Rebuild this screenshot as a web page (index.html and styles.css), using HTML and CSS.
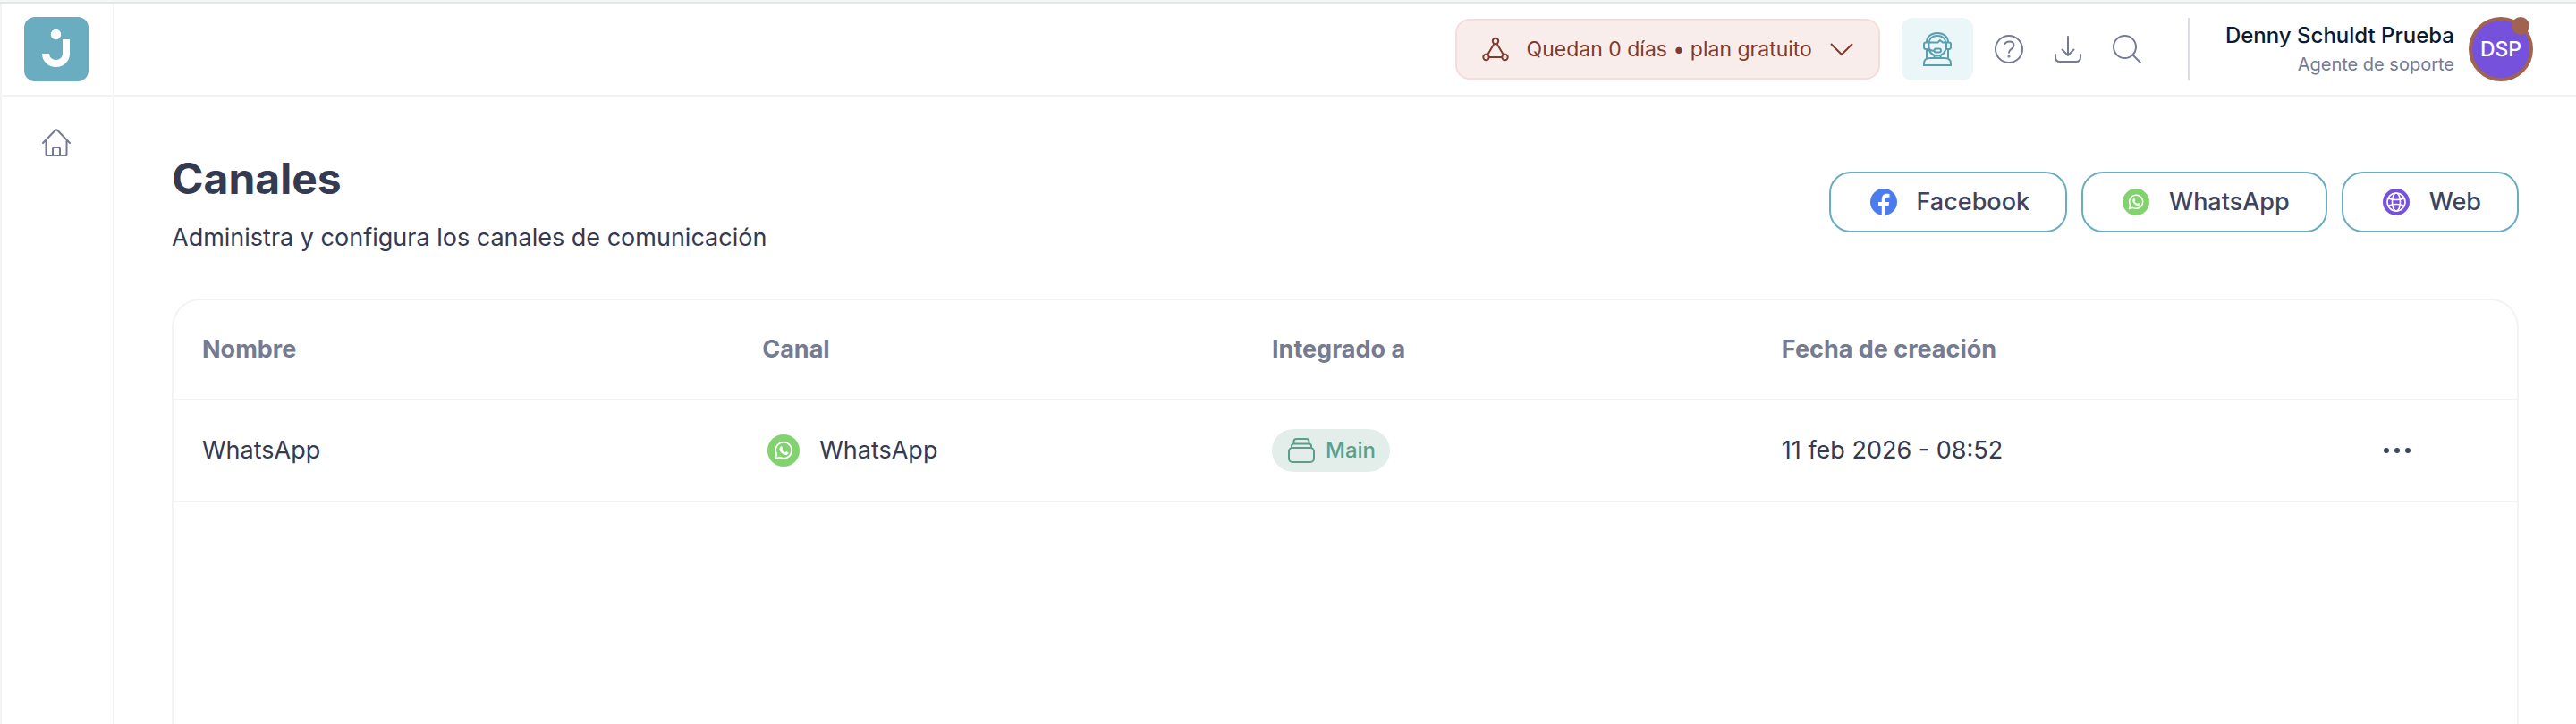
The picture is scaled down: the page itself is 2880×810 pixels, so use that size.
FILE: index.html
```
<!DOCTYPE html>
<html lang="es">
  <head>
    <title>Canales</title>
    <meta charset="UTF-8">
    <meta name="viewport" content="width=device-width, initial-scale=1.0">
    <link rel="stylesheet" href="styles.css">
  </head>
  <body>

<!-- SVG symbols used more than once -->
<svg class="sprite" aria-hidden="true">
  <symbol id="whatsapp" viewBox="0 0 36 36">
    <circle cx="18" cy="18" r="18" fill="#82d36f"/>
    <path d="M9 27l1.300-4.900a9 9 0 1 1 3.500 3.500z" fill="none" stroke="#fff" stroke-width="1.800" stroke-linejoin="round"/>
    <path d="M15.200 13.300c.5-.2 1 0 1.200.4l.7 1.700c.2.5-.7 1.200-.8 1.600.7 1.500 1.900 2.600 3.500 3.200.5-.1 1-1.200 1.500-1.100l1.800.9c.5.3.3 1.200 0 1.700-.7 1.200-2.200 1.500-3.500 1.100-3.300-1-5.400-3.200-6.100-5.900-.2-1.500.5-3.100 1.700-3.600z" fill="#fff"/>
  </symbol>
</svg>

<div class="app">

<!-- SIDEBAR -->
<aside class="sidebar">
  <a class="logo" href="#" aria-label="Inicio">
    <svg viewBox="0 0 72 72" width="72" height="72">
      <circle cx="35.500" cy="19.500" r="5.700" fill="#fff"/>
      <path d="M24 41a11.500 11 0 0 0 23 0V25" fill="none" stroke="#fff" stroke-width="8"/>
    </svg>
  </a>
  <nav class="menu">
    <a href="#" aria-label="Panel">
      <svg class="icon" viewBox="0 0 32 32" width="32" height="32">
        <path d="M1 16L14.300 2.200q1.700-1.600 3.400 0L31 16M4.500 13.500V28q0 2 2 2h19q2 0 2-2V13.500M12 30v-7q0-2 2-2h4q2 0 2 2v7"/>
      </svg>
    </a>
  </nav>
</aside>

<div class="content">

<!-- TOP BAR -->
<header class="topbar">
  <button class="plan" type="button">
    <svg viewBox="0 0 30 28" width="30" height="28">
      <circle cx="15" cy="5" r="3.200"/>
      <circle cx="4.500" cy="23" r="3.200"/>
      <circle cx="25.500" cy="23" r="3.200"/>
      <path d="M13.400 8L6.300 20M16.600 8l7.100 12M8 23h14"/>
    </svg>
    <span>Quedan 0 días • plan gratuito</span>
    <svg viewBox="0 0 26 16" width="26" height="16"><path d="M1 2l12 12L25 2"/></svg>
  </button>
  <button class="agent" type="button" aria-label="Agente">
    <svg viewBox="0 0 32 38" width="32" height="38">
      <path d="M4 11.500C4 5 9 1 16 1s12 4 12 10.500M7 11.500C7 7 10.500 4 16 4s9 3 9 7.500"/>
      <path d="M4 11.500H3q-2 0-2 2V17q0 2 2 2h3v-7.500zM28 11.500h1q2 0 2 2V17q0 2-2 2h-3v-7.500z"/>
      <path d="M7 11.500h9.500L19 9l3 2.500h3.500M6.500 12v5c0 5.500 4 9.500 9.500 9.500s9.500-4 9.500-9.500v-5"/>
      <path d="M6.500 18.500q3 3 6 2M4 19v10M28 19v10M12.500 26v3M19.500 26v3"/>
      <rect x="12.500" y="18.500" width="7.500" height="4" rx="2"/>
      <path d="M1 37v-2q0-6 7-6h16q7 0 7 6v2z"/>
    </svg>
  </button>
  <div class="tools">
    <button type="button" aria-label="Ayuda">
      <svg class="icon" viewBox="0 0 32 32" width="32" height="32">
        <circle cx="16" cy="16" r="15"/>
        <path d="M11.500 10Q13 7.500 16.500 7.500c3 0 5 1.700 5 4.300 0 4.200-5.500 4-5.500 8"/>
        <circle cx="16" cy="24" r=".6"/>
      </svg>
    </button>
    <button type="button" aria-label="Descargar">
      <svg class="icon" viewBox="0 0 32 32" width="32" height="32">
        <path d="M16 2v21M9.500 16.500L16 23l6.500-6.500M2 22v3q0 5 5 5h18q5 0 5-5v-3"/>
      </svg>
    </button>
    <button type="button" aria-label="Buscar">
      <svg class="icon" viewBox="0 0 32 32" width="32" height="32">
        <circle cx="13.500" cy="13.500" r="12.500"/>
        <path d="M22.500 22.500L31 31"/>
      </svg>
    </button>
  </div>
  <div class="user">
    <div>
      <p class="userName">Denny Schuldt Prueba</p>
      <p class="userRole">Agente de soporte</p>
    </div>
    <div class="avatar">DSP<span class="status"></span></div>
  </div>
</header>

<!-- CHANNELS -->
<main>
  <div class="heading">
    <div>
      <h1>Canales</h1>
      <p class="subtitle">Administra y configura los canales de comunicación</p>
    </div>
    <div class="channels">
      <button type="button">
        <svg viewBox="0 0 30 30" width="30" height="30">
          <circle cx="15" cy="15" r="15" fill="#4a7cf0"/>
          <path d="M12.800 30V19.200H9V15h3.800v-3.200c0-3.900 2.300-6 5.700-6 1.300 0 2.700.2 3 .3v3.600h-2c-1.800 0-2.500 1.100-2.500 2.400V15h4.200l-.7 4.200H17V30z" fill="#fff"/>
        </svg>
        Facebook
      </button>
      <button type="button">
        <svg width="30" height="30"><use href="#whatsapp"/></svg>
        WhatsApp
      </button>
      <button type="button">
        <svg viewBox="0 0 30 30" width="30" height="30">
          <circle cx="15" cy="15" r="15" fill="#7551dc"/>
          <g fill="none" stroke="#fff" stroke-width="1.600">
            <circle cx="15" cy="15" r="10"/>
            <ellipse cx="15" cy="15" rx="4.500" ry="10"/>
            <path d="M6 11q9 3 18 0M6 19q9-3 18 0"/>
          </g>
        </svg>
        Web
      </button>
    </div>
  </div>

  <div class="card">
    <table>
      <thead>
        <tr>
          <th class="colName">Nombre</th>
          <th class="col">Canal</th>
          <th class="col">Integrado a</th>
          <th class="col">Fecha de creación</th>
          <th></th>
        </tr>
      </thead>
      <tbody>
        <tr>
          <td>WhatsApp</td>
          <td>
            <div class="channel">
              <svg width="36" height="36"><use href="#whatsapp"/></svg>
              WhatsApp
            </div>
          </td>
          <td>
            <span class="tag">
              <svg viewBox="0 0 30 28" width="30" height="28">
                <rect x="1" y="11" width="28" height="16" rx="4"/>
                <path d="M4 11V9q0-2.500 2.500-2.500h17Q26 6.500 26 9v2M6.500 6.500V4Q6.500 1 9.500 1h11q3 0 3 3v2.500"/>
              </svg>
              Main
            </span>
          </td>
          <td>11 feb 2026 - 08:52</td>
          <td class="actions">
            <button type="button" aria-label="Opciones">
              <svg viewBox="0 0 30 6" width="30" height="6">
                <circle cx="3" cy="3" r="3"/>
                <circle cx="15" cy="3" r="3"/>
                <circle cx="27" cy="3" r="3"/>
              </svg>
            </button>
          </td>
        </tr>
      </tbody>
    </table>
  </div>
</main>

</div>
</div>

  </body>
</html>
```
FILE: styles.css
```
*{
box-sizing: border-box;
}

body{
display: flex;
flex-direction: column;
min-height: 100vh;
margin: 0;
border-top: 2px solid #f5f8f7;
background-color: #fff;
color: #343a52;
font-family: Inter, "Liberation Sans", sans-serif;
font-size: 27px;
line-height: 32px;
}

h1, p{
margin: 0;
}

button{
padding: 0;
border: 0;
background: none;
color: inherit;
font: inherit;
}

svg{
display: block;
flex: none;
}

.sprite{
position: absolute;
width: 0;
height: 0;
}

.app{
display: flex;
flex: 1;
border-top: 2px solid #dfe8e6;
box-shadow: inset 2px 0 #f3f3f4;
}

.icon{
fill: none;
stroke: #757b92;
stroke-width: 2;
stroke-linecap: round;
stroke-linejoin: round;
}

.sidebar{
flex: none;
width: 128px;
border-right: 2px solid #f3f3f4;
}

.logo{
display: flex;
align-items: center;
justify-content: center;
height: 104px;
border-bottom: 2px solid #f3f3f4;
}

.logo svg{
border-radius: 12px;
background-color: #6aadc0;
}

.menu{
display: flex;
flex-direction: column;
align-items: center;
padding-top: 36px;
}

.content{
display: flex;
flex-direction: column;
flex: 1;
min-width: 0;
}

.topbar{
display: flex;
align-items: center;
justify-content: flex-end;
height: 104px;
padding-right: 48px;
border-bottom: 2px solid #f3f3f4;
}

.plan{
display: flex;
align-items: center;
gap: 20px;
height: 68px;
padding: 0 28px;
border: 2px solid #f6dcdc;
border-radius: 16px;
background-color: #f9edeb;
color: #813a2d;
font-size: 23px;
}

.plan svg{
fill: none;
stroke: #813a2d;
stroke-width: 2;
}

.agent{
display: flex;
align-items: center;
justify-content: center;
width: 80px;
height: 70px;
margin-left: 24px;
border-radius: 12px;
background-color: #eaf6f8;
}

.agent svg{
fill: none;
stroke: #5a9fb0;
stroke-width: 2;
}

.tools{
display: flex;
gap: 34px;
padding: 0 52px 0 24px;
}

.user{
display: flex;
align-items: center;
gap: 16px;
height: 70px;
padding-left: 40px;
border-left: 2px solid #dcdce2;
text-align: right;
}

.userName{
color: #0c1a31;
font-size: 24px;
font-weight: 500;
line-height: 34px;
}

.userRole{
color: #757b92;
font-size: 20px;
line-height: 30px;
}

.avatar{
display: flex;
align-items: center;
justify-content: center;
position: relative;
width: 72px;
height: 72px;
border: 4px solid #a0634f;
border-radius: 50%;
background-color: #7551dc;
color: #fff;
font-size: 23px;
font-weight: 500;
}

.status{
position: absolute;
top: -4px;
right: 0;
width: 20px;
height: 20px;
border-radius: 50%;
background-color: #a0634f;
}

main{
display: flex;
flex-direction: column;
flex: 1;
padding: 62px 64px 0;
}

.heading{
display: flex;
align-items: center;
justify-content: space-between;
margin-bottom: 52px;
}

h1{
margin-bottom: 20px;
font-size: 48px;
font-weight: 700;
line-height: 60px;
}

.channels{
display: flex;
gap: 16px;
}

.channels button{
display: flex;
align-items: center;
gap: 22px;
height: 68px;
padding: 0 40px 0 44px;
border: 2px solid #6aadc0;
border-radius: 24px;
color: #3d4462;
font-weight: 500;
}

.card{
flex: 1;
border: 2px solid #f3f3f4;
border-bottom: 0;
border-radius: 32px 32px 0 0;
}

table{
width: 100%;
table-layout: fixed;
border-collapse: separate;
border-spacing: 0;
}

th, td{
height: 114px;
padding: 0 32px;
border-bottom: 2px solid #f3f3f4;
text-align: left;
}

th{
height: 112px;
color: #757b92;
font-weight: 700;
}

.colName{
width: 23.9%;
}

.col{
width: 21.75%;
}

.channel{
display: flex;
align-items: center;
gap: 22px;
padding-left: 6px;
}

.tag{
display: inline-flex;
align-items: center;
gap: 12px;
height: 48px;
padding: 0 16px 0 18px;
border-radius: 24px;
background-color: #e3eeea;
color: #5d9e8b;
font-size: 24px;
font-weight: 500;
vertical-align: middle;
}

.tag svg{
fill: none;
stroke: #5d9e8b;
stroke-width: 2;
}

.actions{
padding-left: 48px;
}

.actions button{
display: block;
margin: 0 auto;
}

.actions svg{
fill: #3d4462;
}
```
